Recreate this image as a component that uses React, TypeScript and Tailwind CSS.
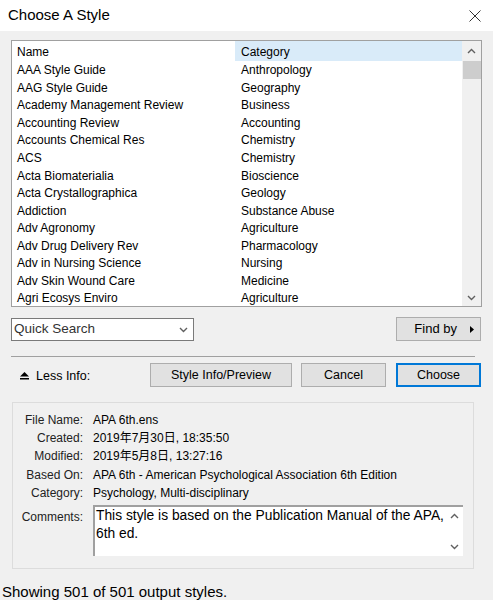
// Choose A Style dialog
const rows: [string, string][] = [
  ["AAA Style Guide", "Anthropology"],
  ["AAG Style Guide", "Geography"],
  ["Academy Management Review", "Business"],
  ["Accounting Review", "Accounting"],
  ["Accounts Chemical Res", "Chemistry"],
  ["ACS", "Chemistry"],
  ["Acta Biomaterialia", "Bioscience"],
  ["Acta Crystallographica", "Geology"],
  ["Addiction", "Substance Abuse"],
  ["Adv Agronomy", "Agriculture"],
  ["Adv Drug Delivery Rev", "Pharmacology"],
  ["Adv in Nursing Science", "Nursing"],
  ["Adv Skin Wound Care", "Medicine"],
  ["Agri Ecosys Enviro", "Agriculture"],
];

const info: [string, string][] = [
  ["File Name:", "APA 6th.ens"],
  ["Created:", "2019年7月30日, 18:35:50"],
  ["Modified:", "2019年5月8日, 13:27:16"],
  ["Based On:", "APA 6th - American Psychological Association 6th Edition"],
  ["Category:", "Psychology, Multi-disciplinary"],
];

function ChevronUp() {
  return (
    <svg width="9" height="6" viewBox="0 0 9 6" fill="none" stroke="#606060" strokeWidth="1.4">
      <path d="M1 5L4.5 1.5L8 5" />
    </svg>
  );
}

function ChevronDown() {
  return (
    <svg width="9" height="6" viewBox="0 0 9 6" fill="none" stroke="#606060" strokeWidth="1.4">
      <path d="M1 1L4.5 4.5L8 1" />
    </svg>
  );
}

function Btn({ label, width, primary }: { label: string; width: string; primary?: boolean }) {
  return (
    <div
      className={[
        "h-[24px] flex items-center justify-center bg-[#e1e1e1] text-[12.5px] text-black",
        width,
        primary ? "border-2 border-[#0078d7]" : "border border-[#adadad]",
      ].join(" ")}
    >
      {label}
    </div>
  );
}

export default function App() {
  return (
    <div
      className="w-[493px] h-[600px] bg-[#f0f0f0] flex flex-col overflow-hidden text-black"
      style={{ fontFamily: '"Liberation Sans", "Noto Sans CJK SC", sans-serif' }}
    >
      {/* 타이틀 바 */}
      <div className="h-[31px] bg-white flex items-center justify-between pl-[8px] pr-[12px] shrink-0">
        <span className="text-[15px]">Choose A Style</span>
        <svg width="12" height="12" viewBox="0 0 12 12" stroke="#333" strokeWidth="1">
          <path d="M0.5 0.5L11.5 11.5M11.5 0.5L0.5 11.5" />
        </svg>
      </div>

      <div className="pl-[11px] pr-[12px] pt-[9px] flex flex-col">
        {/* 리스트 */}
        <div className="w-[471px] h-[267px] border border-[#a0a0a0] bg-white flex">
          <div className="flex-1 flex flex-col text-[12px]">
            <div className="grid grid-cols-[223px_1fr] h-[20px] items-center">
              <span className="pl-[5px] pt-[2px]">Name</span>
              <span className="pl-[6px] pt-[2px] h-full flex items-center bg-[#d9ebf9]">Category</span>
            </div>
            {rows.map(([n, c], i) => (
              <div key={i} className="grid grid-cols-[223px_1fr] h-[17.55px] items-center pt-[1px]">
                <span className="pl-[5px] truncate">{n}</span>
                <span className="pl-[6px] truncate">{c}</span>
              </div>
            ))}
          </div>
          <div className="w-[19px] bg-[#f0f0f0] flex flex-col items-center">
            <div className="h-[20px] flex items-center justify-center"><ChevronUp /></div>
            <div className="w-[18px] h-[18px] bg-[#cdcdcd]" />
            <div className="flex-1" />
            <div className="h-[17px] flex items-center justify-center"><ChevronDown /></div>
          </div>
        </div>

        {/* 빠른 검색 */}
        <div className="mt-[10px] flex items-start justify-between">
          <div className="w-[183px] h-[23px] mt-[1px] border border-[#7a7a7a] bg-white flex items-center justify-between pl-[2px] pr-[5px]">
            <span className="text-[13.5px] text-[#333]">Quick Search</span>
            <ChevronDown />
          </div>
          <div className="w-[85px] h-[24px] bg-[#e1e1e1] border border-[#adadad] flex items-center justify-end pr-[6px] gap-[13px] text-[13px]">
            <span>Find by</span>
            <svg width="4" height="7" viewBox="0 0 4 7" fill="#000">
              <path d="M0 0L4 3.5L0 7Z" />
            </svg>
          </div>
        </div>

        <div className="mt-[15px] h-px w-[464px] bg-[#a0a0a0]" />

        {/* 버튼 줄 */}
        <div className="mt-[6px] flex items-center">
          <div className="w-[139px] flex items-center gap-[7px] pl-[9px] pt-[3px]">
            <svg width="9" height="9" viewBox="0 0 9 9" fill="#000">
              <path d="M4.5 0L9 4.5H0Z" />
              <rect x="0" y="6" width="9" height="1.5" />
            </svg>
            <span className="text-[12.5px]">Less Info:</span>
          </div>
          <Btn label="Style Info/Preview" width="w-[142px]" />
          <div className="w-[9px]" />
          <Btn label="Cancel" width="w-[85px]" />
          <div className="w-[10px]" />
          <Btn label="Choose" width="w-[85px]" primary />
        </div>

        {/* 정보 패널 */}
        <div className="mt-[15px] ml-px w-[462px] h-[167px] border border-[#dcdcdc] flex flex-col pt-[8px] text-[12px]">
          {info.map(([k, v]) => (
            <div key={k} className="flex h-[18.2px] items-center">
              <span className="w-[70px] text-right text-[#222]">{k}</span>
              <span className="pl-[10px] whitespace-nowrap">{v}</span>
            </div>
          ))}
          <div className="flex mt-[3px]">
            <span className="w-[70px] text-right text-[#222] pt-[3px]">Comments:</span>
            <div className="ml-[10px] w-[370px] h-[51px] bg-white border-t-2 border-l-2 border-[#a0a0a0] flex">
              <div className="flex-1 pl-[1px] text-[13.8px] leading-[18px]">
                This style is based on the Publication Manual of the APA, 6th ed.
              </div>
              <div className="w-[17px] flex flex-col items-center justify-between py-[6px]">
                <ChevronUp />
                <ChevronDown />
              </div>
            </div>
          </div>
        </div>
      </div>

      {/* 상태 표시줄 */}
      <div className="mt-[12px] h-px bg-[#dadada]" />
      <div className="flex-1 flex items-center pl-[2px] text-[15px]">
        Showing 501 of 501 output styles.
      </div>
      <div className="h-[2px] bg-[#5c9aa0]" />
    </div>
  );
}
